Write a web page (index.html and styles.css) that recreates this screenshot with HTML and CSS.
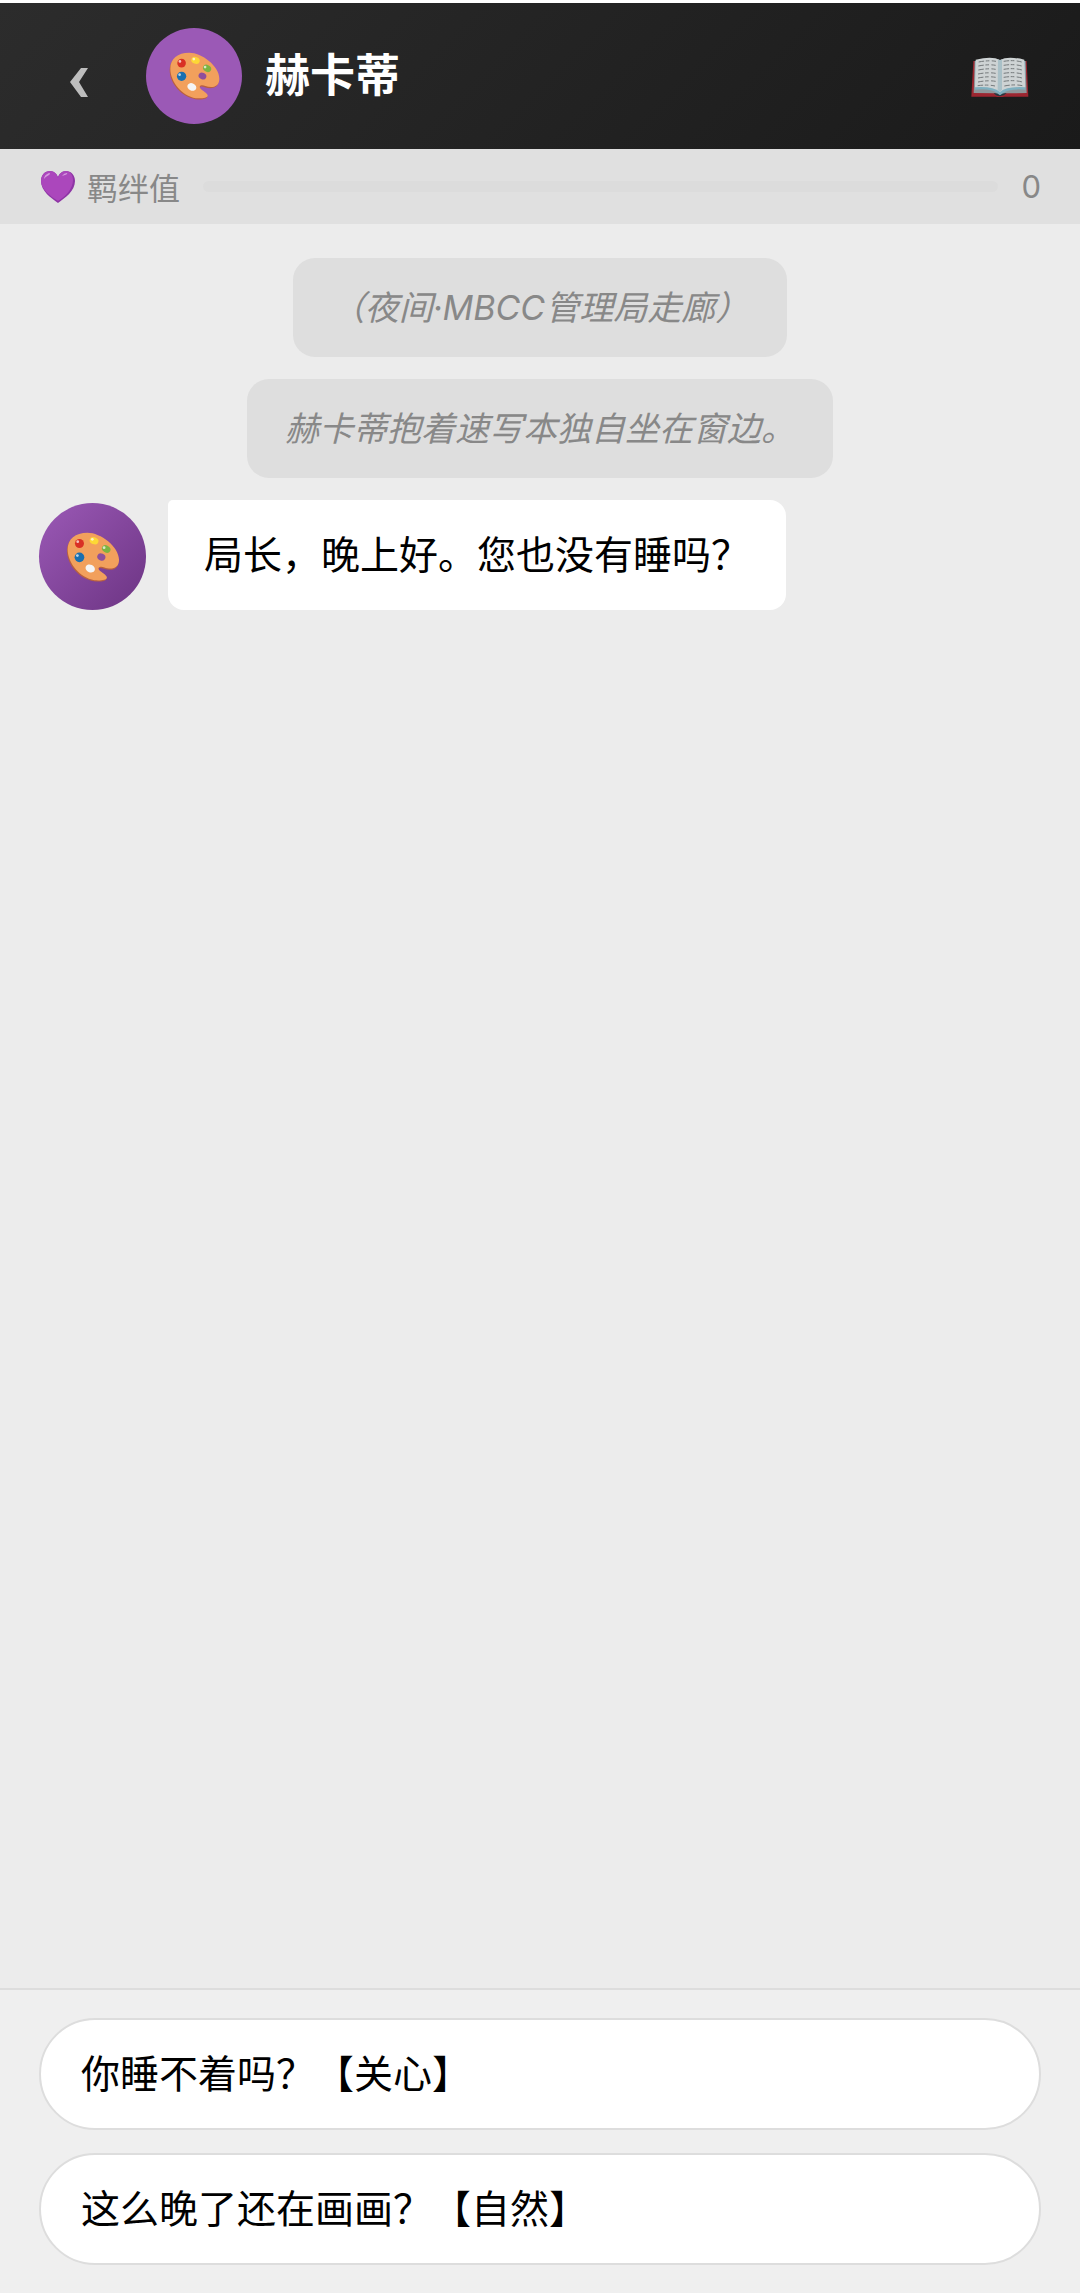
FILE: index.html
```html
<!DOCTYPE html>
<html lang="zh-CN">
<head>
    <meta charset="UTF-8">
    <meta name="viewport" content="width=device-width, initial-scale=1.0">
    <title>赫卡蒂</title>
    <link rel="stylesheet" href="styles.css">
</head>
<body>

<svg width="0" height="0" class="sprite" aria-hidden="true">
    <symbol id="palette" viewBox="86 100 154 144">
        <path fill="#b9603f" d="M145 106C183 106 236 146 236 184C236 212 210 211 194 206C180 201 175 206 182 214C188 220 203 227 202 234C201 243 180 244 166 242C123 235 88 194 88 154C88 124 110 106 145 106Z"/>
        <path fill="#f2a05c" d="M147 102C185 102 238 142 238 180C238 208 212 208 196 202C182 197 174 203 182 211C188 217 203 224 203 231C203 240 180 240 167 239C125 232 90 190 90 150C90 120 112 102 147 102Z"/>
        <ellipse class="hole" cx="187" cy="172" rx="12" ry="10" transform="rotate(25 187 172)"/>
        <circle fill="#d93025" cx="124" cy="133" r="13"/>
        <circle fill="#fff" opacity=".7" cx="119" cy="128" r="4"/>
        <ellipse fill="#fdd835" cx="166" cy="125" rx="13" ry="10" transform="rotate(20 166 125)"/>
        <circle fill="#fff" opacity=".7" cx="161" cy="121" r="4"/>
        <ellipse fill="#7cb342" cx="201" cy="149" rx="13" ry="10" transform="rotate(30 201 149)"/>
        <circle fill="#fff" opacity=".7" cx="195" cy="145" r="4"/>
        <circle fill="#1a6fb0" cx="124" cy="173" r="14"/>
        <circle fill="#fff" opacity=".7" cx="118" cy="168" r="4"/>
        <ellipse fill="#f5f5f5" cx="155" cy="205" rx="14" ry="11" transform="rotate(25 155 205)"/>
    </symbol>
</svg>

<header class="chat-header">
    <button type="button" class="icon-btn" aria-label="返回">
        <svg width="24" height="42" viewBox="0 0 24 42" aria-hidden="true">
            <path fill="#bdbdbd" d="M12 13h7l-9 14 9 15h-7L1 27z"/>
        </svg>
    </button>
    <div class="header-avatar">
        <svg width="51" height="48" aria-hidden="true"><use href="#palette"/></svg>
    </div>
    <h1>赫卡蒂</h1>
    <button type="button" class="icon-btn" aria-label="图鉴">
        <svg width="60" height="42" viewBox="209 166 180 126" aria-hidden="true">
            <path fill="#9c2630" d="M222 184h160l5 107h-74q-11 8-22 0h-75z"/>
            <path fill="#8f979a" d="M226 184h153l3 96-64 1q-16 9-32 0l-63-1z"/>
            <path fill="#7fb0c0" d="M228 184l-1 86q46-4 66 10l9 8 10-8q20-14 66-10l-1-86z"/>
            <path fill="#ced3d4" d="M229 180q50-12 73 1q23-13 73-1l3 83q-54-4-76 14q-22-18-75-14z"/>
            <path fill="#a9c0c7" d="M296 179l6 3 6-3v92l-6 6-7-6z"/>
            <path fill="none" stroke="#74797b" stroke-width="3" stroke-dasharray="16 5 11 7" d="M238 187q30-6 52-2M237 199q30-6 52-2M237 211q30-6 52-2M236 223q30-6 53-2M236 235q30-6 53-2M236 247q30-6 53-2M235 258q30-4 52 1M313 185q30-5 54 2M313 197q30-5 54 2M313 209q30-5 55 2M313 221q30-5 55 2M313 233q30-5 55 2M313 245q30-5 56 2M315 259q30-6 54-1"/>
            <path fill="#243a42" d="M283 280q12 0 19 7q7-7 20-7q-9 10-20 10t-19-10z"/>
        </svg>
    </button>
</header>

<div class="bond-bar">
    <label class="bond-label" for="bond">
        <svg width="37" height="32" viewBox="-1 0 37 32" aria-hidden="true">
            <path fill="#8e35a5" d="M18 32C11 27 1 20 1 10C1 4 5 0 10 0C14 0 17 3 18 6C19 3 22 0 26 0C31 0 35 4 35 10C35 20 25 27 18 32Z"/>
            <path fill="#ab47bc" d="M18 30C10 25 1 18 1 10C1 4 5 0 10 0C14 0 17 3 18 7C19 3 22 0 26 0C30 0 33 4 33 9C33 18 25 26 18 30Z"/>
            <path fill="#d69be0" d="M4 8q0-4 5-6q2 0 0 2q-4 2-5 4zM22 5q2-3 5-3q1 1-2 2z"/>
        </svg>
        羁绊值
    </label>
    <progress id="bond" value="0" max="100"></progress>
    <span class="bond-value">0</span>
</div>

<main class="chat">
    <p class="narration">（夜间·MBCC管理局走廊）</p>
    <p class="narration">赫卡蒂抱着速写本独自坐在窗边。</p>
    <div class="message">
        <div class="avatar">
            <svg width="54" height="50" aria-hidden="true"><use href="#palette"/></svg>
        </div>
        <p class="bubble">局长，晚上好。您也没有睡吗？</p>
    </div>
</main>

<footer class="options">
    <button type="button" class="option">你睡不着吗？【关心】</button>
    <button type="button" class="option">这么晚了还在画画？【自然】</button>
</footer>

</body>
</html>
```
FILE: styles.css
```css
* {
    box-sizing: border-box;
    margin: 0;
    padding: 0;
}
body {
    display: flex;
    flex-direction: column;
    min-height: 100vh;
    border-top: 3px solid #fff;
    background-color: #ececec;
    color: #000;
    font-family: Inter, "Noto Sans CJK SC", sans-serif;
    font-size: 39px;
}
button {
    font: inherit;
    color: inherit;
    border: none;
    cursor: pointer;
}
.sprite {
    position: absolute;
}

/* header */
.chat-header {
    display: flex;
    align-items: center;
    gap: 23px;
    padding: 25px 39px;
    background: linear-gradient(135deg, #2c2c2c, #1a1a1a);
    color: #fff;
}
.icon-btn {
    display: flex;
    align-items: center;
    justify-content: center;
    width: 84px;
    height: 84px;
    background: none;
}
.header-avatar, .avatar {
    display: flex;
    align-items: center;
    justify-content: center;
    flex-shrink: 0;
    border-radius: 50%;
}
.header-avatar {
    width: 96px;
    height: 96px;
    background-color: #9b59b6;
}
.hole {
    fill: #8e4f9c;
}
.chat-header h1 {
    flex: 1;
    font-size: 45px;
    font-weight: 600;
    line-height: 60px;
}

/* bond value */
.bond-bar {
    display: flex;
    align-items: center;
    gap: 23px;
    padding: 0 39px;
    height: 75px;
    background-color: #e0e0e0;
    color: #888;
    font-size: 31px;
}
.bond-label {
    display: flex;
    align-items: center;
    gap: 11px;
}
progress {
    flex: 1;
    min-width: 0;
    height: 11px;
    appearance: none;
    border: none;
    border-radius: 6px;
    background-color: #dcdcdc;
    overflow: hidden;
}
progress::-webkit-progress-bar {
    background-color: #dcdcdc;
}
progress::-webkit-progress-value {
    background-color: #9b59b6;
}

/* messages */
.chat {
    flex: 1;
    display: flex;
    flex-direction: column;
    gap: 22px;
    padding: 34px 39px;
}
.narration {
    align-self: center;
    padding: 22px 38px;
    border-radius: 22px;
    background-color: #dedede;
    color: #888;
    font-size: 34px;
    font-style: italic;
    line-height: 55px;
}
.message {
    display: flex;
    align-items: flex-end;
    gap: 22px;
}
.avatar {
    width: 107px;
    height: 107px;
    background: linear-gradient(135deg, #9b59b6, #6c3483);
}
.bubble {
    padding: 25px 36px;
    border-radius: 5px 16px 16px 16px;
    background-color: #fff;
    line-height: 60px;
}

/* reply options */
.options {
    display: flex;
    flex-direction: column;
    gap: 23px;
    padding: 28px 39px;
    border-top: 2px solid #ddd;
    background-color: #efefef;
}
.option {
    padding: 24px 40px;
    border: 2px solid #ddd;
    border-radius: 56px;
    background-color: #fff;
    line-height: 60px;
    text-align: left;
}
```
